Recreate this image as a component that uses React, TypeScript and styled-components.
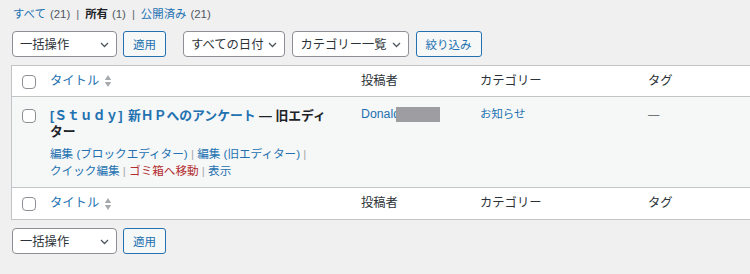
import React from 'react';
import styled, {createGlobalStyle} from "styled-components";

const GlobalStyle = createGlobalStyle`
    body {
        margin: 0;
        background: #f0f0f1;
        color: #3c434a;
        font-family: "Liberation Sans", "Noto Sans CJK JP", sans-serif;
        overflow: hidden;
    }
`

const Chevron = () => (
    <svg width="9" height="6" viewBox="0 0 9 6">
        <path d="M1 1l3.5 3.5L8 1" fill="none" stroke="#50575e" strokeWidth="1.3"/>
    </svg>
)

const SortIcon = () => (
    <svg width="8" height="14" viewBox="0 0 8 14">
        <path d="M4 1l3.2 5H0.8z" fill="#a7aaad"/>
        <path d="M4 13l3.2-5H0.8z" fill="#a7aaad"/>
    </svg>
)

const Select = ({label, width}: {label: string, width?: string}) => (
    <StyledSelect width={width}>
        <span>{label}</span>
        <Chevron/>
    </StyledSelect>
)

const Toolbar = ({filters}: {filters?: boolean}) => (
    <StyledToolbar>
        <Select label={'一括操作'} width={'105px'}/>
        <Button>適用</Button>
        {filters && (
            <Filters>
                <Select label={'すべての日付'}/>
                <Select label={'カテゴリー一覧'}/>
                <Button>絞り込み</Button>
            </Filters>
        )}
    </StyledToolbar>
)

const HeadRow = ({foot}: {foot?: boolean}) => (
    <tr>
        <Th check foot={foot}><Checkbox/></Th>
        <Th foot={foot}>
            <SortLink>タイトル<SortIcon/></SortLink>
        </Th>
        <Th foot={foot}>投稿者</Th>
        <Th foot={foot}>カテゴリー</Th>
        <Th foot={foot}>タグ</Th>
    </tr>
)

const actions = [
    {label: '編集 (ブロックエディター)'},
    {label: '編集 (旧エディター)'},
    {label: 'クイック編集'},
    {label: 'ゴミ箱へ移動', danger: true},
    {label: '表示'},
]

export default function App() {
    return (
        <Page>
            <GlobalStyle/>
            <SubLinks>
                <li><Link>すべて</Link><Count>(21)</Count><Sep>|</Sep></li>
                <li><Current>所有</Current><Count>(1)</Count><Sep>|</Sep></li>
                <li><Link>公開済み</Link><Count>(21)</Count></li>
            </SubLinks>
            <Toolbar filters/>
            <Table>
                <colgroup>
                    <col style={{width: '28px'}}/>
                    <col style={{width: '311px'}}/>
                    <col style={{width: '119px'}}/>
                    <col style={{width: '168px'}}/>
                    <col/>
                </colgroup>
                <thead><HeadRow/></thead>
                <tbody>
                    <tr>
                        <Td check><Checkbox/></Td>
                        <Td>
                            <TitleBlock>
                                <RowTitle><Tag>[Ｓｔｕｄｙ]</Tag> 新ＨＰへのアンケート</RowTitle>
                                <PostState> — 旧エディター</PostState>
                            </TitleBlock>
                            <RowActions>
                                {actions.map((a, i) => (
                                    <React.Fragment key={a.label}>
                                        <Action>
                                            <ActionLink danger={a.danger}>{a.label}</ActionLink>
                                            {i < actions.length - 1 && <Bar> |</Bar>}
                                        </Action>
                                        {' '}
                                    </React.Fragment>
                                ))}
                            </RowActions>
                        </Td>
                        <Td>
                            <Author>
                                <Link>Donald</Link>
                                <Redacted/>
                            </Author>
                        </Td>
                        <Td><Link>お知らせ</Link></Td>
                        <Td><Dash>—</Dash></Td>
                    </tr>
                </tbody>
                <tfoot><HeadRow foot/></tfoot>
            </Table>
            <BottomBar>
                <Toolbar/>
            </BottomBar>
        </Page>
    );
}

const Page = styled.div`
    padding: 6px 0 0 11px;
`

const SubLinks = styled.ul`
    display: flex;
    margin: 0 0 0 2px;
    padding: 0;
    list-style: none;
    font-size: 11.4px;
    line-height: 17px;
`

const Link = styled.a`
    color: #2271b1;
    cursor: pointer;
`

const Current = styled.span`
    color: #1d2327;
    font-weight: 700;
`

const Count = styled.span`
    margin-left: 4px;
    color: #50575e;
`

const Sep = styled.span`
    margin: 0 6px;
    color: #646970;
`

const StyledToolbar = styled.div`
    display: flex;
    align-items: center;
    height: 26px;
    margin-top: 8px;
    gap: 6px;
    padding-left: 1px;
`

const Filters = styled.div`
    display: flex;
    gap: 7px;
    margin-left: 11px;
`

const StyledSelect = styled.div<{width?: string}>`
    box-sizing: border-box;
    display: flex;
    align-items: center;
    justify-content: space-between;
    gap: 5px;
    width: ${props => props.width || 'auto'};
    height: 26px;
    padding: 0 7px;
    background: #fff;
    border: 1px solid #8c8f94;
    border-radius: 4px;
    color: #2c3338;
    font-size: 12.3px;

    svg {
        margin-top: 1px;
    }
`

const Button = styled.div`
    box-sizing: border-box;
    display: flex;
    align-items: center;
    height: 26px;
    padding: 0 9px;
    background: #f6f7f7;
    border: 1px solid #2271b1;
    border-radius: 3px;
    color: #2271b1;
    font-size: 11.5px;
`

const Table = styled.table`
    box-sizing: border-box;
    width: 760px;
    margin-top: 8px;
    table-layout: fixed;
    border: 1px solid #c3c4c7;
    border-spacing: 0;
    background: #fff;
`

const Th = styled.th<{check?: boolean, foot?: boolean}>`
    height: ${props => props.foot ? '32px' : '31px'};
    box-sizing: border-box;
    padding: ${props => props.check ? '0 0 0 10px' : '0 10px'};
    border-bottom: ${props => props.foot ? 'none' : '1px solid #c3c4c7'};
    border-top: ${props => props.foot ? '1px solid #c3c4c7' : 'none'};
    text-align: left;
    font-weight: 400;
    font-size: 12.3px;
    line-height: 17px;
    color: #2c3338;
    vertical-align: middle;

    & > div {
        margin-top: 1px;
    }
`

const Td = styled.td<{check?: boolean}>`
    padding: ${props => props.check ? '12px 0 0 10px' : '9px 10px 8px'};
    background: #f6f7f7;
    vertical-align: top;
    font-size: 11.4px;
    line-height: 17px;
`

const Checkbox = styled.div`
    box-sizing: border-box;
    width: 14px;
    height: 14px;
    border: 1px solid #8c8f94;
    border-radius: 4px;
    background: #fff;
`

const SortLink = styled.a`
    display: inline-flex;
    align-items: center;
    gap: 5px;
    color: #2271b1;
`

const TitleBlock = styled.div`
    max-width: 283px;
    margin-top: 2px;
    font-size: 12.8px;
    line-height: 16px;
    font-weight: 700;
`

const RowTitle = styled.a`
    color: #2271b1;
`

const Tag = styled.span`
    margin-right: 2px;
`

const PostState = styled.span`
    color: #1d2327;
`

const RowActions = styled.div`
    max-width: 290px;
    margin-top: 5px;
    font-size: 11.6px;
    line-height: 17px;
`

const Action = styled.span`
    white-space: nowrap;
`

const ActionLink = styled.a<{danger?: boolean}>`
    color: ${props => props.danger ? '#b32d2e' : '#2271b1'};
`

const Bar = styled.span`
    color: #a7aaad;
`

const Author = styled.div`
    position: relative;
    display: inline-block;
    font-size: 12.3px;
`

const Redacted = styled.span`
    position: absolute;
    left: 35px;
    top: 1px;
    width: 44px;
    height: 15px;
    background: #9d9da2;
`

const Dash = styled.span`
    color: #50575e;
`

const BottomBar = styled.div`
    margin-top: 3px;
`
